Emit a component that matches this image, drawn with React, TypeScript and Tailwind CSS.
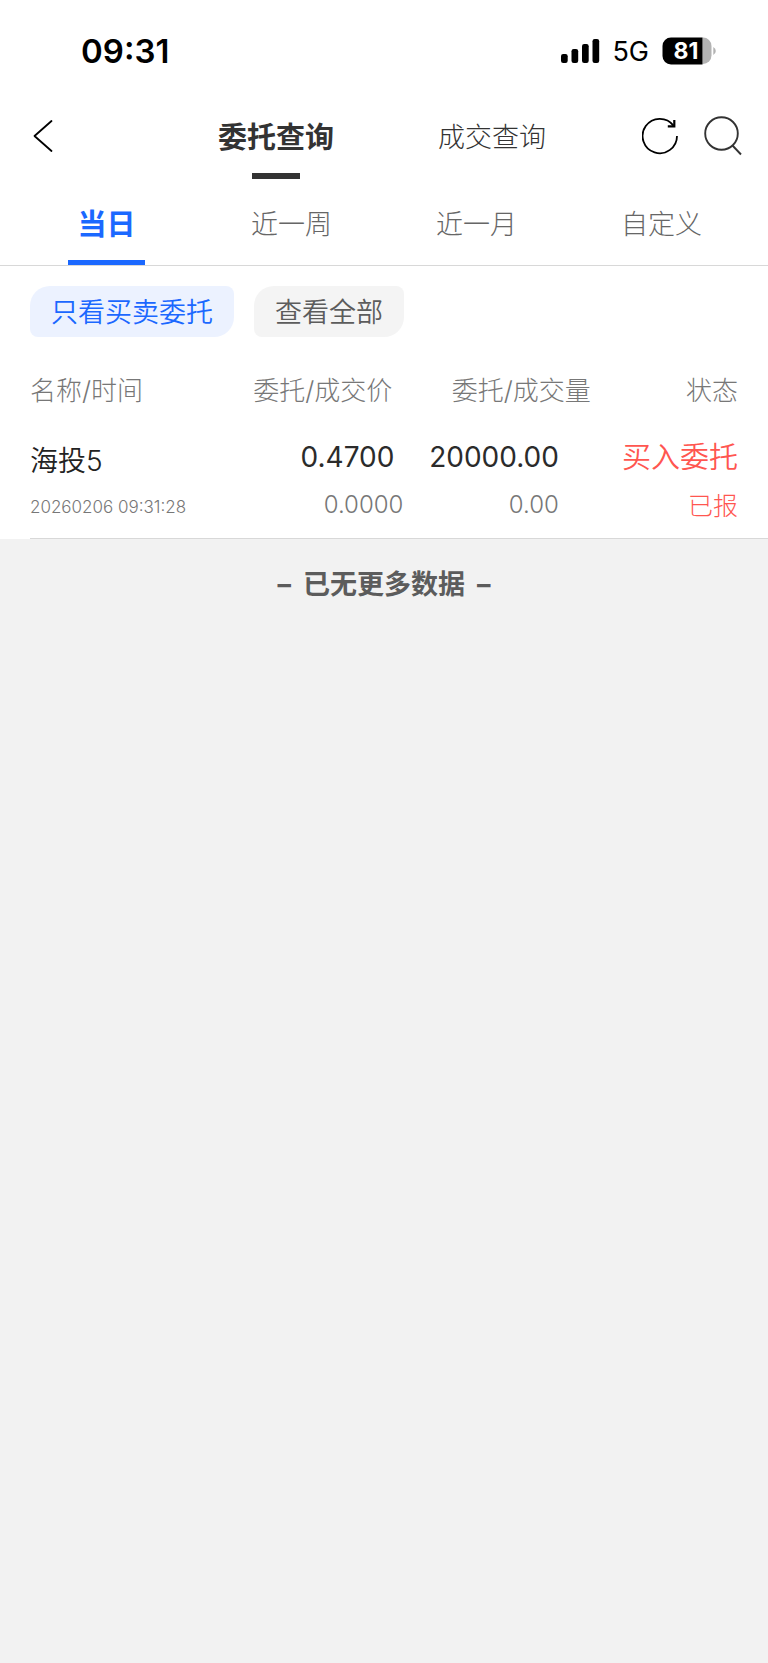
import { useState } from "react";

const ranges = ["当日", "近一周", "近一月", "自定义"];

const orders = [
  {
    name: "海投5",
    time: "20260206 09:31:28",
    price: "0.4700",
    dealPrice: "0.0000",
    amount: "20000.00",
    dealAmount: "0.00",
    side: "买入委托",
    status: "已报",
  },
];

function StatusBar() {
  return (
    <div className="flex items-center justify-between h-[102px] pl-[81px] pr-[52px]">
      <span className="text-[33px] leading-10 font-semibold">09:31</span>
      <div className="flex items-center">
        <svg width="39" height="24" viewBox="0 0 39 24" aria-hidden="true">
          <rect x="0" y="15" width="6.700" height="9" rx="2.200" />
          <rect x="10.500" y="10" width="6.700" height="14" rx="2.200" />
          <rect x="21" y="5" width="6.700" height="19" rx="2.200" />
          <rect x="31.500" y="0" width="6.700" height="24" rx="2.200" />
        </svg>
        <span className="ml-3 pt-[2px] text-[27px] leading-8">5G</span>
        <div className="relative ml-[13px] flex items-center">
          <svg width="54" height="28" viewBox="0 0 54 28" aria-hidden="true">
            <path d="M40.500 0.500 H41 a8.500 8.500 0 0 1 8.500 8.500 V18.500 a8.500 8.500 0 0 1 -8.500 8.500 H40.500 Z" fill="#b3b3b3" />
            <path d="M9 0.500 H40.500 V27.500 H9 a8.500 8.500 0 0 1 -8.500 -8.500 V9 a8.500 8.500 0 0 1 8.500 -8.500 Z" />
            <path d="M51.300 10 q2.500 1.500 2.500 4 q0 2.500 -2.500 4 Z" fill="#b3b3b3" />
          </svg>
          <span className="absolute inset-y-0 left-0 w-12 text-center text-[23px] leading-7 font-bold text-white">
            81
          </span>
        </div>
      </div>
    </div>
  );
}

function Header() {
  return (
    <header className="flex h-[82px] pl-[30px] pr-[26px]">
      <button aria-label="返回" className="pb-[14px] cursor-pointer">
        <svg width="24" height="34" viewBox="0 0 24 34" fill="none" stroke="#000" strokeWidth="1.800" strokeLinecap="round" strokeLinejoin="round">
          <path d="M21.500 2 L4.500 17 L21.500 32" />
        </svg>
      </button>
      <nav className="flex flex-1 items-start justify-center gap-[104px] pl-[68px] pt-5">
        <button className="flex flex-col items-center gap-[19px] cursor-pointer">
          <span className="text-[29px] leading-8 font-bold text-[#333]">委托查询</span>
          <span className="w-12 h-[6px] bg-[#333]" />
        </button>
        <button className="text-[27px] leading-8 font-light text-[#333] cursor-pointer">
          成交查询
        </button>
      </nav>
      <div className="flex gap-6 pb-[14px]">
        <button aria-label="刷新" className="cursor-pointer">
          <svg width="38" height="40" viewBox="0 0 38 40" fill="none" stroke="#000" strokeWidth="1.800">
            <path d="M35 20 A17.200 17.200 0 1 1 31.500 9.600" />
            <path d="M32.300 4 V10.300 H25.800" strokeWidth="2.200" />
          </svg>
        </button>
        <button aria-label="搜索" className="cursor-pointer">
          <svg width="38" height="40" viewBox="0 0 38 40" fill="none" stroke="#333" strokeWidth="1.900">
            <circle cx="17.500" cy="17.500" r="16.300" />
            <path d="M28.500 29.500 L37 38.500" />
          </svg>
        </button>
      </div>
    </header>
  );
}

export default function App() {
  const [range, setRange] = useState("当日");

  return (
    <main className="min-h-screen w-full bg-[#f2f2f2] font-['Inter','Noto_Sans_CJK_SC',sans-serif]">
      <div className="bg-white">
        <StatusBar />
        <Header />

        <div className="grid grid-cols-4 px-[14px] border-b border-[#d8d8d8]">
          {ranges.map((item) => (
            <button
              key={item}
              onClick={() => setRange(item)}
              className="flex flex-col items-center justify-between h-[81px] pt-[25px] cursor-pointer"
            >
              <span
                className={
                  item === range
                    ? "text-[29px] leading-8 font-bold text-[#1b68ff]"
                    : "text-[27px] leading-8 font-light text-[#666]"
                }
              >
                {item}
              </span>
              {item === range && <span className="w-[77px] h-[5px] bg-[#1b68ff]" />}
            </button>
          ))}
        </div>

        <div className="flex gap-5 px-[30px] pt-5">
          <button className="h-[51px] px-[21px] pt-[2px] text-[27px] leading-8 font-[350] bg-[#ecf2ff] text-[#1b68ff] rounded-tl-[20px] rounded-tr-lg rounded-br-[20px] rounded-bl-lg cursor-pointer">
            只看买卖委托
          </button>
          <button className="h-[51px] px-[21px] pt-[2px] text-[27px] leading-8 font-[350] bg-[#f4f4f4] text-[#5c5c5c] rounded-tl-[20px] rounded-tr-lg rounded-br-[20px] rounded-bl-lg cursor-pointer">
            查看全部
          </button>
        </div>

        <div className="pl-[30px]">
          <table className="w-full table-fixed border-b border-[#d8d8d8]">
            <thead className="text-[26px] leading-8 text-[#777]">
              <tr>
                <th className="w-[26%] pt-[38px] pb-[26px] text-left font-light">名称/时间</th>
                <th className="w-[25%] pt-[38px] pb-[26px] pr-[14px] text-right font-light">委托/成交价</th>
                <th className="w-[25%] pt-[38px] pb-[26px] text-right font-light">委托/成交量</th>
                <th className="w-[24%] pt-[38px] pb-[26px] pr-[30px] text-right font-light">状态</th>
              </tr>
            </thead>
            <tbody>
              {orders.map((order) => (
                <tr key={order.time} className="align-top">
                  <td className="pt-2 pb-2">
                    <div className="text-[28px] leading-10 font-[350] text-[#222]">{order.name}</div>
                    <div className="pt-[6px] text-[17px] leading-10 font-light text-[#777] whitespace-nowrap">{order.time}</div>
                  </td>
                  <td className="pb-2 pr-[3px] text-right">
                    <div className="pr-[9px] text-[28px] leading-12 text-[#2b2b2b]">{order.price}</div>
                    <div className="text-[24px] leading-12 font-light text-[#777]">{order.dealPrice}</div>
                  </td>
                  <td className="pb-2 pr-8 text-right">
                    <div className="text-[28px] leading-12 text-[#2b2b2b]">{order.amount}</div>
                    <div className="text-[24px] leading-12 font-light text-[#777]">{order.dealAmount}</div>
                  </td>
                  <td className="pb-2 pr-[30px] text-right text-[#ff5650]">
                    <div className="pt-px text-[29px] leading-12 font-[350]">{order.side}</div>
                    <div className="text-[25px] leading-12 font-light">{order.status}</div>
                  </td>
                </tr>
              ))}
            </tbody>
          </table>
        </div>
      </div>

      <p className="flex justify-center gap-3 pt-[30px] text-[27px] leading-8 font-bold text-[#5c5c5c]">
        <span>–</span>
        <span>已无更多数据</span>
        <span>–</span>
      </p>
    </main>
  );
}
